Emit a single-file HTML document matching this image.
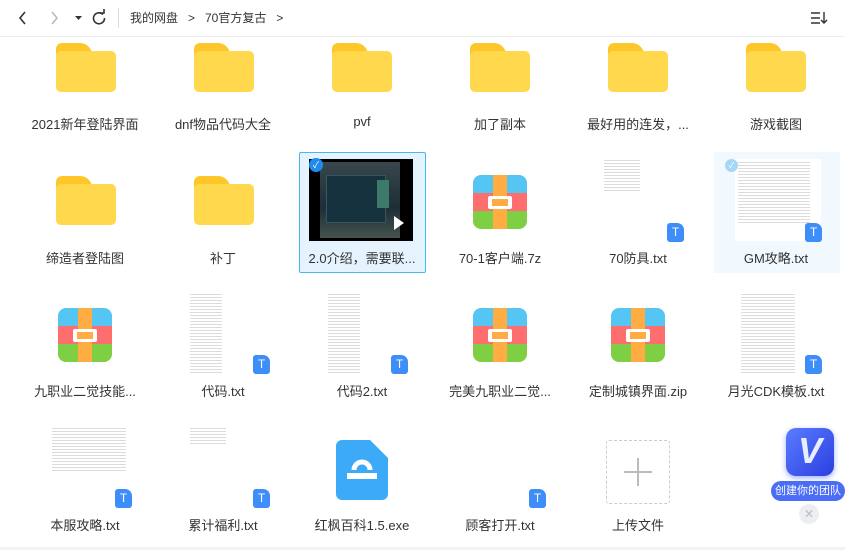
<!DOCTYPE html><html><head><meta charset="utf-8"><style>
*{margin:0;padding:0;box-sizing:border-box}
body{width:845px;height:550px;background:#fff;position:relative;overflow:hidden;font-family:"Liberation Sans","Noto Sans CJK SC",sans-serif;color:#333}
.a{position:absolute}
.lbl{position:absolute;width:130px;text-align:center;font-size:13px;color:#333;white-space:nowrap}
.fold{position:absolute;width:60px;height:49px}
.fold .t{position:absolute;left:0;top:0;width:36px;height:14px;background:#ffc62a;border-radius:6px 12px 0 0}
.fold .b{position:absolute;left:0;top:8px;width:60px;height:41px;background:#ffd84d;border-radius:5px}
.zip{position:absolute;width:54px;height:54px;border-radius:8px;overflow:hidden}
.tx{position:absolute;background:repeating-linear-gradient(#fff 0 1px,#dcdcdc 1px 2px,#fff 2px 3px)}
.badge{position:absolute;width:17px;height:19px;background:#3d8ef8;border-radius:3px 7px 3px 3px;color:#fff;font-size:12px;text-align:center;line-height:19px}
</style></head><body>
<div class="a" style="left:0;top:36px;width:845px;height:1px;background:#eee"></div>
<svg class="a" style="left:15px;top:8px" width="100" height="20"><path d="M10 4 5 10 10 16" stroke="#333" stroke-width="1.6" fill="none"/><path d="M37 4 42 10 37 16" stroke="#bbb" stroke-width="1.6" fill="none"/><path d="M60 8h7l-3.5 4z" fill="#333"/><path d="M88 6.5a5.5 5.5 0 1 0 1.5 3.5" stroke="#333" stroke-width="1.6" fill="none"/><path d="M85 5h4v-4" stroke="#333" stroke-width="1.6" fill="none"/></svg>
<div class="a" style="left:118px;top:8px;width:1px;height:20px;background:#ddd"></div>
<div class="a" style="left:130px;top:9px;font-size:12px;color:#333">我的网盘 &nbsp;&nbsp;&gt;&nbsp;&nbsp; 70官方复古 &nbsp;&nbsp;&gt;</div>
<svg class="a" style="left:810px;top:10px" width="18" height="16"><path d="M1 3h9M1 8h9M1 13h9M14 2v11M11 10l3 3 3-3" stroke="#333" stroke-width="1.4" fill="none"/></svg>

<div class="fold" style="left:56px;top:43px"><div class="t"></div><div class="b"></div></div>
<div class="fold" style="left:194px;top:43px"><div class="t"></div><div class="b"></div></div>
<div class="fold" style="left:332px;top:43px"><div class="t"></div><div class="b"></div></div>
<div class="fold" style="left:470px;top:43px"><div class="t"></div><div class="b"></div></div>
<div class="fold" style="left:608px;top:43px"><div class="t"></div><div class="b"></div></div>
<div class="fold" style="left:746px;top:43px"><div class="t"></div><div class="b"></div></div>
<div class="lbl" style="left:20px;top:114px">2021新年登陆界面</div>
<div class="lbl" style="left:158px;top:114px">dnf物品代码大全</div>
<div class="lbl" style="left:297px;top:114px">pvf</div>
<div class="lbl" style="left:435px;top:114px">加了副本</div>
<div class="lbl" style="left:573px;top:114px">最好用的连发，...</div>
<div class="lbl" style="left:711px;top:114px">游戏截图</div>

<div class="fold" style="left:56px;top:176px"><div class="t"></div><div class="b"></div></div>
<div class="fold" style="left:194px;top:176px"><div class="t"></div><div class="b"></div></div>
<div class="a" style="left:299px;top:152px;width:127px;height:121px;background:#e4f3fd;border:1px solid #47b8f0;border-radius:2px"></div>
<div class="a" style="left:309px;top:159px;width:104px;height:82px;background:#000"></div>
<div class="a" style="left:320px;top:162px;width:80px;height:76px;background:linear-gradient(#39474d,#1e2e36 60%,#45524f);"></div>
<div class="a" style="left:326px;top:175px;width:60px;height:48px;background:#17323f;border:1px solid #3b5560"></div>
<div class="a" style="left:377px;top:180px;width:12px;height:28px;background:#3e7a6a"></div>
<svg class="a" style="left:388px;top:212px" width="22" height="22"><path d="M6 4l10 7-10 7z" fill="#fff"/></svg>
<div class="a" style="left:309px;top:158px;width:14px;height:14px;border-radius:50%;background:#1f8bef;color:#fff;font-size:9px;text-align:center;line-height:14px">✓</div>
<div class="zip" style="left:473px;top:175px"><div class="a" style="left:0;top:0;width:54px;height:18px;background:#55c6f4"></div><div class="a" style="left:0;top:18px;width:54px;height:18px;background:#ff6e6e"></div><div class="a" style="left:0;top:36px;width:54px;height:18px;background:#7ecf43"></div><div class="a" style="left:20px;top:0;width:14px;height:54px;background:#ffad42"></div><div class="a" style="left:15px;top:21px;width:24px;height:13px;background:#fff;border-radius:2px"></div><div class="a" style="left:19px;top:24px;width:16px;height:7px;background:#ffad42"></div></div>
<div class="a" style="left:714px;top:152px;width:126px;height:121px;background:#f1f8fe"></div>
<div class="tx" style="left:604px;top:159px;width:36px;height:34px"></div>
<div class="badge" style="left:667px;top:223px">T</div>
<div class="a" style="left:735px;top:159px;width:86px;height:82px;background:#fff"></div>
<div class="tx" style="left:738px;top:161px;width:72px;height:62px"></div>
<div class="a" style="left:725px;top:159px;width:13px;height:13px;border-radius:50%;background:#a8d6f8;color:#fff;font-size:8px;text-align:center;line-height:13px">✓</div>
<div class="badge" style="left:805px;top:223px">T</div>
<div class="lbl" style="left:20px;top:248px">缔造者登陆图</div>
<div class="lbl" style="left:158px;top:248px">补丁</div>
<div class="lbl" style="left:297px;top:248px">2.0介绍，需要联...</div>
<div class="lbl" style="left:435px;top:248px">70-1客户端.7z</div>
<div class="lbl" style="left:573px;top:248px">70防具.txt</div>
<div class="lbl" style="left:711px;top:248px">GM攻略.txt</div>

<div class="zip" style="left:58px;top:308px"><div class="a" style="left:0;top:0;width:54px;height:18px;background:#55c6f4"></div><div class="a" style="left:0;top:18px;width:54px;height:18px;background:#ff6e6e"></div><div class="a" style="left:0;top:36px;width:54px;height:18px;background:#7ecf43"></div><div class="a" style="left:20px;top:0;width:14px;height:54px;background:#ffad42"></div><div class="a" style="left:15px;top:21px;width:24px;height:13px;background:#fff;border-radius:2px"></div><div class="a" style="left:19px;top:24px;width:16px;height:7px;background:#ffad42"></div></div>
<div class="tx" style="left:190px;top:293px;width:32px;height:82px"></div>
<div class="badge" style="left:253px;top:355px">T</div>
<div class="tx" style="left:328px;top:293px;width:32px;height:82px"></div>
<div class="badge" style="left:391px;top:355px">T</div>
<div class="zip" style="left:473px;top:308px"><div class="a" style="left:0;top:0;width:54px;height:18px;background:#55c6f4"></div><div class="a" style="left:0;top:18px;width:54px;height:18px;background:#ff6e6e"></div><div class="a" style="left:0;top:36px;width:54px;height:18px;background:#7ecf43"></div><div class="a" style="left:20px;top:0;width:14px;height:54px;background:#ffad42"></div><div class="a" style="left:15px;top:21px;width:24px;height:13px;background:#fff;border-radius:2px"></div><div class="a" style="left:19px;top:24px;width:16px;height:7px;background:#ffad42"></div></div>
<div class="zip" style="left:611px;top:308px"><div class="a" style="left:0;top:0;width:54px;height:18px;background:#55c6f4"></div><div class="a" style="left:0;top:18px;width:54px;height:18px;background:#ff6e6e"></div><div class="a" style="left:0;top:36px;width:54px;height:18px;background:#7ecf43"></div><div class="a" style="left:20px;top:0;width:14px;height:54px;background:#ffad42"></div><div class="a" style="left:15px;top:21px;width:24px;height:13px;background:#fff;border-radius:2px"></div><div class="a" style="left:19px;top:24px;width:16px;height:7px;background:#ffad42"></div></div>
<div class="tx" style="left:741px;top:293px;width:54px;height:82px"></div>
<div class="badge" style="left:805px;top:355px">T</div>
<div class="lbl" style="left:20px;top:381px">九职业二觉技能...</div>
<div class="lbl" style="left:158px;top:381px">代码.txt</div>
<div class="lbl" style="left:297px;top:381px">代码2.txt</div>
<div class="lbl" style="left:435px;top:381px">完美九职业二觉...</div>
<div class="lbl" style="left:573px;top:381px">定制城镇界面.zip</div>
<div class="lbl" style="left:711px;top:381px">月光CDK模板.txt</div>

<div class="tx" style="left:52px;top:427px;width:74px;height:44px"></div>
<div class="badge" style="left:115px;top:489px">T</div>
<div class="tx" style="left:190px;top:427px;width:36px;height:18px"></div>
<div class="badge" style="left:253px;top:489px">T</div>
<svg class="a" style="left:336px;top:440px" width="52" height="60"><path d="M6 0h28l18 18v36a6 6 0 0 1-6 6H6a6 6 0 0 1-6-6V6a6 6 0 0 1 6-6z" fill="#3daaf8"/><path d="M18 30a8 8 0 0 1 16 0" stroke="#fff" stroke-width="5" fill="none"/><rect x="11" y="33" width="30" height="6" fill="#fff"/></svg>
<div class="badge" style="left:529px;top:489px">T</div>
<div class="a" style="left:606px;top:440px;width:64px;height:64px;border:1px dashed #ccc;border-radius:3px"></div>
<div class="a" style="left:624px;top:471px;width:28px;height:2px;background:#bbb"></div>
<div class="a" style="left:637px;top:458px;width:2px;height:28px;background:#bbb"></div>
<div class="lbl" style="left:20px;top:515px">本服攻略.txt</div>
<div class="lbl" style="left:158px;top:515px">累计福利.txt</div>
<div class="lbl" style="left:297px;top:515px">红枫百科1.5.exe</div>
<div class="lbl" style="left:435px;top:515px">顾客打开.txt</div>
<div class="lbl" style="left:573px;top:515px">上传文件</div>

<div class="a" style="left:786px;top:428px;width:48px;height:48px;border-radius:10px;background:linear-gradient(135deg,#5a7cff,#2b3fe0);box-shadow:0 2px 6px #9bb0ff"></div>
<div class="a" style="left:790px;top:430px;width:40px;font-size:36px;font-weight:bold;color:#e8eeff;text-align:center;font-style:italic">V</div>
<div class="a" style="left:771px;top:481px;width:74px;height:20px;border-radius:10px;background:#4a6cf7;color:#fff;font-size:11px;line-height:20px;text-align:center">创建你的团队</div>
<div class="a" style="left:799px;top:504px;width:20px;height:20px;border-radius:50%;background:#eceef2;color:#b8bcc4;font-size:12px;text-align:center;line-height:20px">✕</div>
<div class="a" style="left:0;top:547px;width:845px;height:3px;background:#f2f2f2"></div>
</body></html>
